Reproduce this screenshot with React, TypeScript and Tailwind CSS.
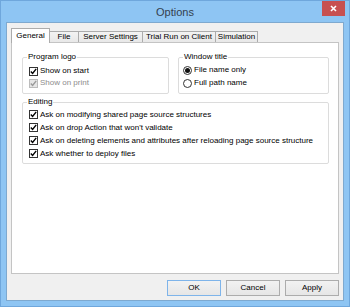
import React from "react";

function Check({ disabled }: { disabled?: boolean }) {
  return (
    <span
      className={
        "w-[9px] h-[9px] shrink-0 border flex items-center justify-center " +
        (disabled ? "border-[#bcbcbc] bg-[#e6e6e6]" : "border-[#333333] bg-white")
      }
    >
      <svg width="7" height="7" viewBox="0 0 7 7">
        <path
          d="M0.8 3.6 L2.6 5.5 L6.2 0.9"
          fill="none"
          stroke={disabled ? "#9a9a9a" : "#000"}
          strokeWidth="1.4"
        />
      </svg>
    </span>
  );
}

function Radio({ on }: { on?: boolean }) {
  return (
    <span className="w-[9px] h-[9px] shrink-0 rounded-full border border-[#333333] bg-white flex items-center justify-center">
      {on && <span className="w-[5px] h-[5px] rounded-full bg-[#111]" />}
    </span>
  );
}

function CheckRow({ label, disabled, h }: { label: string; disabled?: boolean; h: string }) {
  return (
    <div className={"flex items-center gap-[2px] " + h}>
      <Check disabled={disabled} />
      <span className={disabled ? "text-[#8d8d8d]" : "text-black"}>{label}</span>
    </div>
  );
}

function RadioRow({ label, on }: { label: string; on?: boolean }) {
  return (
    <div className="flex items-center gap-[2px] h-[12px]">
      <Radio on={on} />
      <span className="text-black">{label}</span>
    </div>
  );
}

export default function App() {
  return (
    <div className="w-[350px] h-[307px] bg-[#8ec5f3] border border-[#6fa7dc] flex flex-col font-['Liberation_Sans',Arial,sans-serif] text-[8px] leading-[10px] relative overflow-hidden">
      <div className="h-[21px] relative flex items-center justify-center">
        <span className="text-[11px] leading-[12px] text-[#34404e]">Options</span>
        <div className="absolute right-[4px] top-0 w-[23px] h-[15px] bg-[#c75050] flex items-center justify-center">
          <svg width="7" height="7" viewBox="0 0 7 7">
            <path d="M1 1 L6 6 M6 1 L1 6" stroke="#fff" strokeWidth="1.6" />
          </svg>
        </div>
      </div>
      <div className="flex-1 mx-[5px] mb-[5px] border border-[#7ea9cf] bg-[#f0f0f0] flex flex-col pt-[5px] px-[4px] pb-[4px]">
        <div className="h-[14px] flex items-end">
          <div className="relative z-10 w-[39px] h-[15px] -mb-px bg-white border-l border-t border-r border-[#acacac] flex items-center justify-center pb-[1px]">
            General
          </div>
          <div className="w-[30px] h-[11px] -ml-px bg-gradient-to-b from-[#f3f3f3] to-[#e8e8e8] border-t border-r border-l border-[#acacac] flex items-center justify-center">
            File
          </div>
          <div className="w-[64px] h-[11px] bg-gradient-to-b from-[#f3f3f3] to-[#e8e8e8] border-t border-r border-[#acacac] flex items-center justify-center">
            Server Settings
          </div>
          <div className="w-[73px] h-[11px] bg-gradient-to-b from-[#f3f3f3] to-[#e8e8e8] border-t border-r border-[#acacac] flex items-center justify-center">
            Trial Run on Client
          </div>
          <div className="w-[42px] h-[11px] bg-gradient-to-b from-[#f3f3f3] to-[#e8e8e8] border-t border-r border-[#acacac] flex items-center justify-center">
            Simulation
          </div>
        </div>
        <div className="flex-1 border border-[#c4c4c4] bg-white pt-[9px] pl-[10px] flex flex-col">
          <div className="flex gap-[9px]">
            <fieldset className="w-[147px] border border-[#dcdcdc] rounded-[2px] pl-[6px] pb-[4px] m-0">
              <legend className="ml-[-2px] px-[1px] leading-[10px] text-black">Program logo</legend>
              <div className="pt-[3px]">
                <CheckRow label="Show on start" h="h-[12px]" />
                <CheckRow label="Show on print" disabled h="h-[12px]" />
              </div>
            </fieldset>
            <fieldset className="w-[151px] border border-[#dcdcdc] rounded-[2px] pl-[4px] pb-[4px] m-0">
              <legend className="px-[1px] leading-[10px] text-black">Window title</legend>
              <div className="pt-[2px]">
                <RadioRow label="File name only" on />
                <div className="h-[1px]" />
                <RadioRow label="Full path name" />
              </div>
            </fieldset>
          </div>
          <fieldset className="mt-[3px] w-[307px] border border-[#dcdcdc] rounded-[2px] pl-[6px] pb-[3px]">
            <legend className="ml-[-2px] px-[1px] leading-[10px] text-black">Editing</legend>
            <div className="pt-[1px]">
              <CheckRow label="Ask on modifying shared page source structures" h="h-[13px]" />
              <CheckRow label="Ask on drop Action that won't validate" h="h-[13px]" />
              <CheckRow label="Ask on deleting elements and attributes after reloading page source structure" h="h-[13px]" />
              <CheckRow label="Ask whether to deploy files" h="h-[13px]" />
            </div>
          </fieldset>
        </div>
        <div className="mt-[6px] h-[16px] flex justify-end gap-[5px]">
          <button className="w-[54px] h-[16px] border border-[#7eb4ea] bg-gradient-to-b from-[#f2f2f2] to-[#e6e6e6] text-black flex items-center justify-center">
            OK
          </button>
          <button className="w-[54px] h-[16px] border border-[#acacac] bg-gradient-to-b from-[#f2f2f2] to-[#e6e6e6] text-black flex items-center justify-center">
            Cancel
          </button>
          <button className="w-[54px] h-[16px] border border-[#acacac] bg-gradient-to-b from-[#f2f2f2] to-[#e6e6e6] text-black flex items-center justify-center">
            Apply
          </button>
        </div>
      </div>
    </div>
  );
}
